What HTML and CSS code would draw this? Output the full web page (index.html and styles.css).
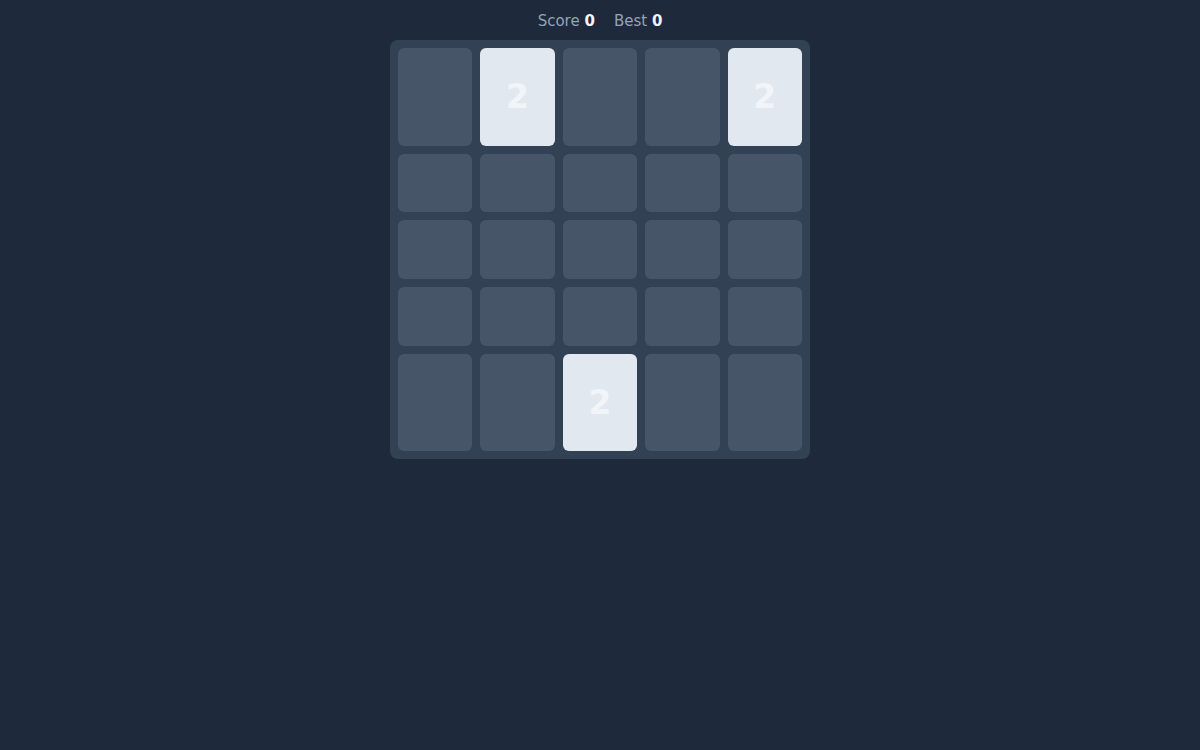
FILE: index.html
```html
<!DOCTYPE html>
<html lang="en">
<head>
  <meta charset="UTF-8" />
  <meta name="viewport" content="width=device-width, initial-scale=1" />
  <title>2048</title>
  <link rel="stylesheet" href="styles.css">
</head>
<body>
  <div class="scores">
    <span class="stat">Score <strong>0</strong></span>
    <span class="stat">Best <strong>0</strong></span>
  </div>

  <div class="board">
    <div class="cell"></div>
    <div class="cell tile">2</div>
    <div class="cell"></div>
    <div class="cell"></div>
    <div class="cell tile">2</div>

    <div class="cell"></div>
    <div class="cell"></div>
    <div class="cell"></div>
    <div class="cell"></div>
    <div class="cell"></div>

    <div class="cell"></div>
    <div class="cell"></div>
    <div class="cell"></div>
    <div class="cell"></div>
    <div class="cell"></div>

    <div class="cell"></div>
    <div class="cell"></div>
    <div class="cell"></div>
    <div class="cell"></div>
    <div class="cell"></div>

    <div class="cell"></div>
    <div class="cell"></div>
    <div class="cell tile">2</div>
    <div class="cell"></div>
    <div class="cell"></div>
  </div>
</body>
</html>
```

FILE: styles.css
```css
body {
  margin: 0;
  background: #1e293b;
  font-family: "DejaVu Sans", sans-serif;
  color: #f1f5f9;
}
.scores {
  display: flex;
  justify-content: center;
  align-items: center;
  gap: 19px;
  height: 40px;
  padding-top: 2px;
  box-sizing: border-box;
  font-size: 15px;
  color: #94a3b8;
}
.scores strong {
  color: #f1f5f9;
}
.board {
  width: 420px;
  box-sizing: border-box;
  margin: 0 auto;
  padding: 8px;
  background: #334155;
  border-radius: 8px;
  display: grid;
  grid-template-columns: repeat(5, 1fr);
  gap: 8px;
}
.cell {
  box-sizing: border-box;
  background: #475569;
  border-radius: 6px;
  min-height: 58.75px;
  display: flex;
  align-items: center;
  justify-content: center;
}
.tile {
  background: #e2e8f0;
  font-size: 33px;
  font-weight: bold;
  line-height: 39px;
  padding: 29.25px 0;
  color: #f1f5f9;
}
```
